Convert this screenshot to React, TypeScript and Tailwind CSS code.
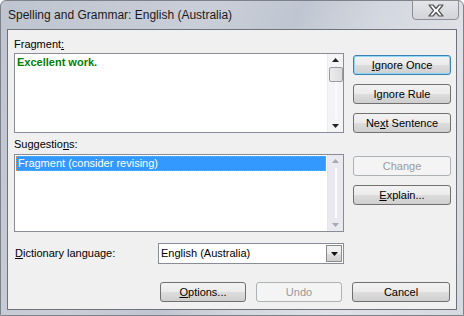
import React from "react";

const font = { fontFamily: '"Liberation Sans", Arial, sans-serif' };

const btnBase =
  "flex items-center justify-center h-[20px] rounded-[3px] border text-[11px] leading-none";
const btnNormal =
  "border-[#707070] text-black bg-[linear-gradient(#f2f2f2_0%,#ebebeb_50%,#dddddd_50%,#cfcfcf_100%)]";
const btnDefault =
  "border-[#3c7fb1] text-black shadow-[inset_0_0_0_1px_#8fd8f7] bg-[linear-gradient(#f2f2f2_0%,#ebebeb_50%,#dddddd_50%,#cfcfcf_100%)]";
const btnDisabled = "border-[#adb2b5] text-[#9a9a9a] bg-[#f4f4f4]";

const Btn = ({
  children,
  kind = "normal",
  className = "",
}: {
  children: React.ReactNode;
  kind?: "normal" | "default" | "disabled";
  className?: string;
}) => {
  const k = kind === "default" ? btnDefault : kind === "disabled" ? btnDisabled : btnNormal;
  return <div className={`${btnBase} ${k} ${className}`}>{children}</div>;
};

const Arrow = ({ up, color }: { up?: boolean; color: string }) => (
  <svg width="7" height="4" viewBox="0 0 7 4">
    {up ? <path d="M0 4 L3.5 0 L7 4 Z" fill={color} /> : <path d="M0 0 L7 0 L3.5 4 Z" fill={color} />}
  </svg>
);

const ScrollBar = ({ disabled }: { disabled?: boolean }) => (
  <div
    className={`w-[16px] h-full flex flex-col items-center justify-between py-[4px] border-l ${
      disabled ? "bg-[#e9e9ef] border-[#e4e4ea]" : "bg-[#f4f4f6] border-[#ececf0]"
    }`}
  >
    <Arrow up color={disabled ? "#a8a8b0" : "#222"} />
    <div className="flex-1 w-full flex flex-col items-center pt-[5px] pb-[5px]">
      {!disabled && (
        <div className="w-[14px] h-[15px] rounded-[2px] border border-[#9a9aa2] bg-[linear-gradient(90deg,#ececec,#dcdcdc)]" />
      )}
      <div className="flex-1 w-[2px] bg-[#fbfbfd]" />
    </div>
    <Arrow color={disabled ? "#a8a8b0" : "#222"} />
  </div>
);

const CloseX = () => (
  <svg width="18" height="13" viewBox="0 0 18 13">
    <path
      d="M2 1 H6 L9 4.5 L12 1 H16 L11.5 6.5 L16 12 H12 L9 8.5 L6 12 H2 L6.5 6.5 Z"
      fill="#fafafa"
      stroke="#555"
      strokeWidth="1.2"
      strokeLinejoin="round"
    />
  </svg>
);

export default function App() {
  return (
    <div style={font} className="w-[464px] h-[316px] bg-white">
      <div className="w-[464px] h-[316px] flex flex-col rounded-t-[6px] border border-[#7c818a] bg-[linear-gradient(115deg,#bfc5d0_0%,#c9ced8_35%,#c0c6d1_50%,#d2d6de_62%,#dfe1e6_78%,#d6d9df_100%)]">
        <div className="h-[28px] flex items-start justify-between">
          <div className="pl-[7px] pt-[7px] text-[12px] leading-[15px] text-[#1a1a1a]">
            Spelling and Grammar: English (Australia)
          </div>
          <div className="mr-[4px] mt-[-1px] w-[47px] h-[20px] rounded-b-[4px] border border-[#8c8f96] bg-[linear-gradient(#e4e5e8,#d2d4d9)] flex items-center justify-center">
            <CloseX />
          </div>
        </div>
        <div className="mx-[6px] mb-[5px] flex-1 border border-[#6e717a] bg-[#f0f0f0] pl-[6px] pt-[7px] text-[11px] text-black">
          <div className="flex gap-[9px]">
            <div className="w-[330px] flex flex-col">
              <div className="h-[16px] leading-[15px]">
                Fragment<span className="underline">:</span>
              </div>
              <div className="h-[80px] border border-[#898b96] bg-white flex">
                <div className="flex-1 px-[2px] pt-[1px] font-bold text-[#008000] leading-[14px]">
                  Excellent work.
                </div>
                <ScrollBar />
              </div>
              <div className="mt-[4px] h-[17px] leading-[15px]">
                Suggestio<span className="underline">n</span>s:
              </div>
              <div className="h-[78px] border border-[#898b96] bg-white flex">
                <div className="flex-1 p-[1px]">
                  <div className="h-[15px] leading-[13px] bg-[#3399ff] text-white border border-dotted border-[#e8913a] pl-[1px]">
                    Fragment (consider revising)
                  </div>
                </div>
                <ScrollBar disabled />
              </div>
            </div>
            <div className="w-[98px] flex flex-col pt-[18px]">
              <Btn kind="default">
                <span className="underline">I</span>gnore Once
              </Btn>
              <Btn className="mt-[9px]">
                I<span className="underline">g</span>nore Rule
              </Btn>
              <Btn className="mt-[9px]">
                Ne<span className="underline">x</span>t Sentence
              </Btn>
              <Btn kind="disabled" className="mt-[23px]">
                Change
              </Btn>
              <Btn className="mt-[9px]">
                <span className="underline">E</span>xplain...
              </Btn>
            </div>
          </div>
          <div className="mt-[11px] flex items-center">
            <div className="w-[144px] pl-[1px]">
              <span className="underline">D</span>ictionary language:
            </div>
            <div className="w-[186px] h-[21px] border border-[#898b96] bg-white flex items-center pl-[2px]">
              <div className="flex-1">English (Australia)</div>
              <div className="w-[16px] h-[17px] mr-[1px] border border-[#8a8a8a] bg-[linear-gradient(#f2f2f2_0%,#ebebeb_50%,#dddddd_50%,#cfcfcf_100%)] flex items-center justify-center">
                <Arrow color="#111" />
              </div>
            </div>
          </div>
          <div className="mt-[18px] flex pl-[146px] gap-[10px]">
            <Btn className="w-[86px]">
              <span className="underline">O</span>ptions...
            </Btn>
            <Btn kind="disabled" className="w-[86px]">
              Undo
            </Btn>
            <Btn className="w-[98px]">Cancel</Btn>
          </div>
        </div>
      </div>
    </div>
  );
}
